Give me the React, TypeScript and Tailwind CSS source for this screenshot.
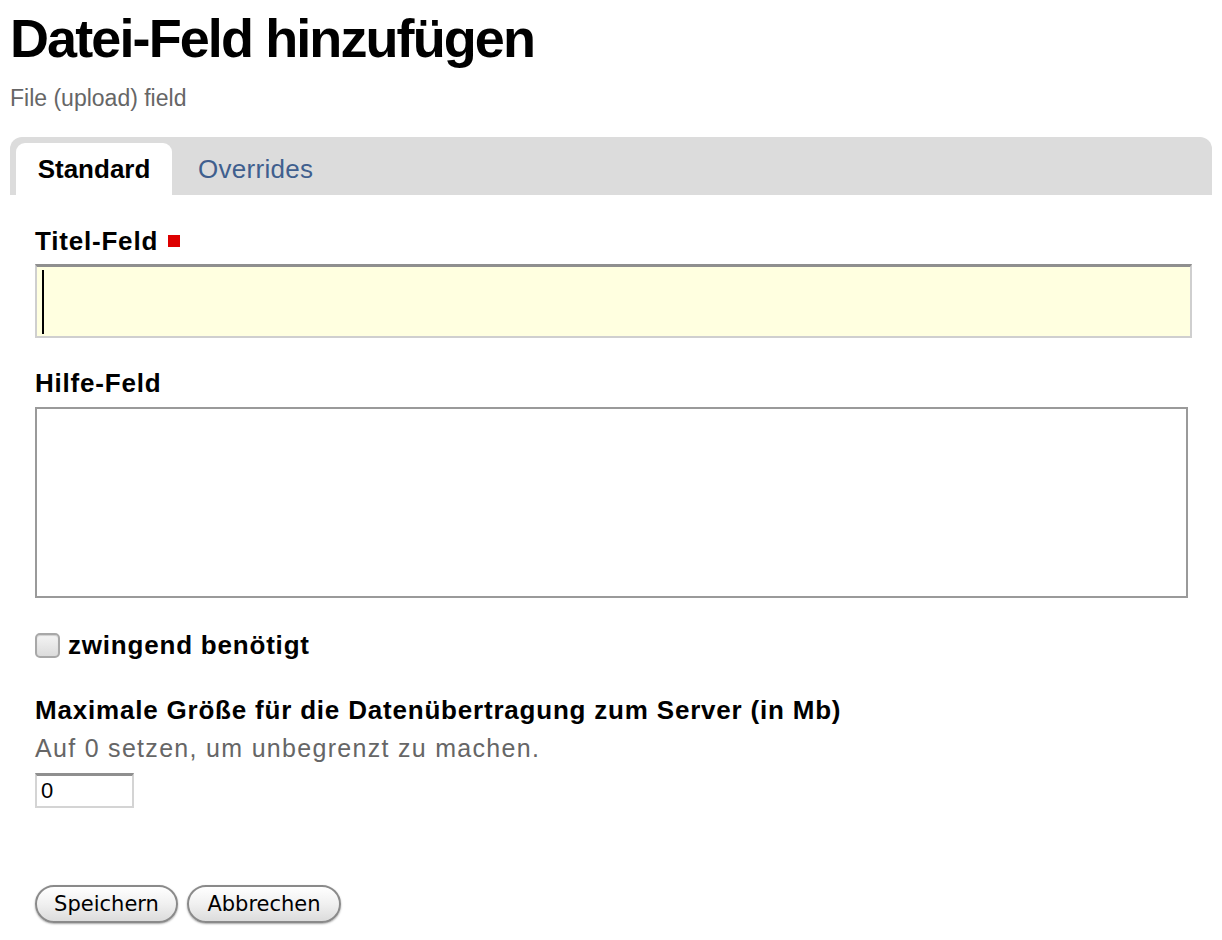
import React from 'react';

const font = { fontFamily: '"Liberation Sans", Arial, Helvetica, sans-serif' };

const App: React.FC = () => {
  return (
    <div className="min-h-screen bg-white text-black font-['Liberation_Sans',Arial,sans-serif]">
      <div className="px-[10px] pt-[12px]">
        <h1 className="text-[54px] leading-[52px] font-bold tracking-[-1.9px]">Datei-Feld hinzufügen</h1>
        <p className="mt-[21px] text-[23px] leading-[26px] text-[#666]">File (upload) field</p>

        {/* tabs */}
        <div className="mt-[26px] flex h-[58px] items-end rounded-t-[12px] bg-[#dcdcdc] pl-[6px]">
          <div className="flex h-[52px] w-[156px] items-center justify-center rounded-t-[9px] bg-white text-[26px] font-bold">
            Standard
          </div>
          <div className="flex h-[52px] items-center px-[26px] text-[26px] tracking-[0.3px] text-[#3f5f8e]">Overrides</div>
        </div>

        <form className="px-[25px]">
          {/* title field */}
          <div className="mt-[31px] flex items-center gap-[10px] text-[26px] leading-[30px] font-bold tracking-[0.8px]">
            Titel-Feld
            <span className="inline-block h-[12px] w-[12px] bg-[#dd0000]" />
          </div>
          <div className="relative mt-[8px] h-[74px] w-[1157px] border-2 border-t-[3px] border-[#cfcfcf] border-t-[#8f8f8f] bg-[#ffffe0]">
            <input type="text" className="h-full w-full bg-transparent px-[6px] outline-none" />
            <span className="absolute left-[5px] top-[3px] h-[64px] w-[2px] bg-black" />
          </div>

          {/* help field */}
          <div className="mt-[30px] text-[26px] leading-[30px] font-bold tracking-[0.8px]">Hilfe-Feld</div>
          <textarea className="mt-[9px] block h-[191px] w-[1153px] resize-none border-2 border-[#9a9a9a] outline-none" />

          {/* required checkbox */}
          <label className="mt-[32px] flex items-center gap-[8px] text-[26px] leading-[30px] font-bold tracking-[0.8px]">
            <span className="inline-block h-[25px] w-[25px] rounded-[5px] border-2 border-[#a8a8a8] bg-gradient-to-b from-[#f4f4f4] to-[#dcdcdc] shadow-[inset_0_1px_1px_rgba(0,0,0,0.15)]" />
            zwingend benötigt
          </label>

          {/* max size */}
          <div className="mt-[35px] text-[26px] leading-[30px] font-bold tracking-[0.8px]">
            Maximale Größe für die Datenübertragung zum Server (in Mb)
          </div>
          <div className="mt-[8px] text-[25px] leading-[30px] text-[#666] tracking-[1.3px]">Auf 0 setzen, um unbegrenzt zu machen.</div>
          <div className="mt-[10px] h-[35px] w-[99px] border-2 border-t-[3px] border-[#d4d4d4] border-t-[#8f8f8f] bg-white">
            <input
              type="text"
              defaultValue="0"
              className="h-full w-full px-[4px] text-[22px] outline-none"
              style={font}
            />
          </div>

          {/* buttons */}
          <div className="mt-[77px] flex gap-[9px] font-['Lucida_Grande','DejaVu_Sans',sans-serif]">
            <button
              type="button"
              className="h-[38px] w-[143px] rounded-full border-2 border-[#8a8a8a] bg-gradient-to-b from-[#ffffff] via-[#f0f0f0] to-[#dcdcdc] text-[21px] leading-none text-black shadow-[0_1px_2px_rgba(0,0,0,0.35)]"
            >
              Speichern
            </button>
            <button
              type="button"
              className="h-[38px] w-[154px] rounded-full border-2 border-[#8a8a8a] bg-gradient-to-b from-[#ffffff] via-[#f0f0f0] to-[#dcdcdc] text-[21px] leading-none text-black shadow-[0_1px_2px_rgba(0,0,0,0.35)]"
            >
              Abbrechen
            </button>
          </div>
        </form>
      </div>
    </div>
  );
};

export default App;
